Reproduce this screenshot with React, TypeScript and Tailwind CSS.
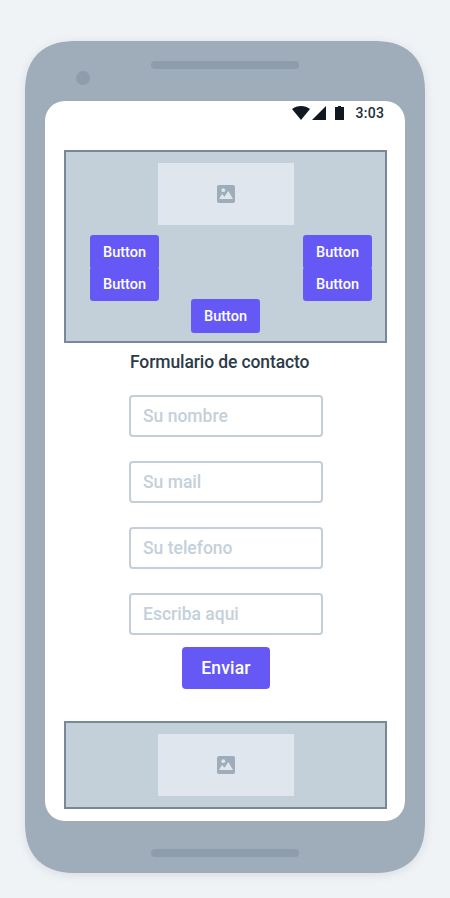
const fontStack = "font-['Roboto','Liberation_Sans',sans-serif]";

function PictureIcon() {
  return (
    <svg width="18" height="18" viewBox="0 0 18 18" aria-hidden="true">
      <rect width="18" height="18" rx="2" fill="#9eadb9" />
      <circle cx="6.3" cy="5.2" r="1.9" fill="#dfe6ed" />
      <path d="M2 14 L5 9 L7.5 11.7 L11.3 6 L16 14 Z" fill="#dfe6ed" />
    </svg>
  );
}

function ImagePlaceholder() {
  return (
    <div className="mx-auto flex h-[62px] w-[136px] items-center justify-center bg-[#dfe6ee]">
      <PictureIcon />
    </div>
  );
}

function SmallButton() {
  return (
    <button className="h-[34px] w-[69px] rounded-[3px] bg-[#6558f5] pt-px text-[14.5px] leading-[33px] font-medium text-white">
      Button
    </button>
  );
}

function StatusBar() {
  return (
    <div className="flex h-6 items-center pl-[228px]">
      <svg className="shrink-0" width="52" height="14" viewBox="0 0 52 14" fill="#101820" aria-hidden="true">
        <path d="M0 3 C5 -1 13 -1 18 3 L9 14 Z" />
        <path d="M34 0 V14 H20 Z" />
        <path d="M43 1 H46 V0 H49 V1 H52 V14 H43 Z" />
      </svg>
      <span className="ml-[11.5px] text-[14px] leading-5 font-medium tracking-[0.02em] text-[#222d38]">3:03</span>
    </div>
  );
}

const fields = ["Su nombre", "Su mail", "Su telefono", "Escriba aqui"];

export default function App() {
  return (
    <main className={`h-[898px] w-[450px] overflow-hidden bg-[#eff3f6] px-[25px] pt-[41px] ${fontStack}`}>
      <div className="h-[832px] rounded-[52px] bg-[#9eadb9] px-5 shadow-[0_2px_10px_rgba(70,80,90,0.13)] [corner-shape:superellipse(1.3)]">
        <div className="flex h-[60px] items-start">
          <div className="mt-[30px] ml-[31px] size-[14px] rounded-full bg-[#8e9dab]" />
          <div className="mt-5 ml-[61px] h-2 w-[148px] rounded-full bg-[#8e9dab]" />
        </div>
        <div className="h-[720px] rounded-[21px] bg-white pr-[18px] pl-[19px] [corner-shape:superellipse(1.1)]">
          <StatusBar />
          <section className="mt-[25px] h-[193px] border-2 border-[#778899] bg-[#c4d0d9] pt-[11px]">
            <div className="pl-px"><ImagePlaceholder /></div>
            <div className="mt-2.5 flex justify-between pr-[13px] pl-6">
              <SmallButton />
              <SmallButton />
            </div>
            <div className="-mt-0.5 flex justify-between pr-[13px] pl-6">
              <SmallButton />
              <SmallButton />
            </div>
            <div className="-mt-0.5 flex justify-center">
              <SmallButton />
            </div>
          </section>
          <h1 className="mt-[7px] ml-[66px] h-6 whitespace-nowrap text-[17.5px] leading-6 font-medium tracking-[-0.006em] text-[#2c3b48]">
            Formulario de contacto
          </h1>
          <form className="mt-[21px] flex flex-col items-center">
            <div className="flex flex-col gap-6 pl-px">
              {fields.map((field) => (
                <input
                  key={field}
                  placeholder={field}
                  className="block h-[42px] w-[194px] rounded-[4px] border-2 border-[#c4ced9] px-3 text-[17.5px] font-medium placeholder:text-[#c4d0da]"
                />
              ))}
            </div>
            <button type="button" className="mt-3 ml-px h-[42px] w-[88px] rounded-[4px] bg-[#6558f5] text-[17.5px] font-medium tracking-[0.01em] text-white">
              Enviar
            </button>
          </form>
          <section className="mt-8 h-[88px] border-2 border-[#778899] bg-[#c4d0d9] pt-[11px] pl-px">
            <ImagePlaceholder />
          </section>
        </div>
        <div className="mx-auto mt-7 h-2 w-[148px] rounded-full bg-[#8e9dab]" />
      </div>
    </main>
  );
}
